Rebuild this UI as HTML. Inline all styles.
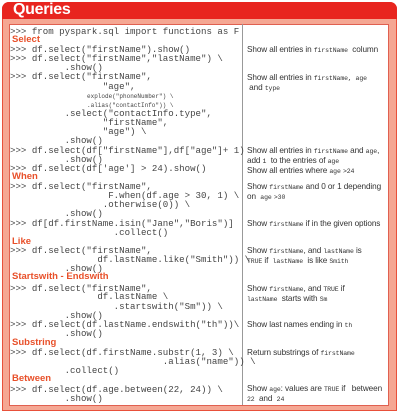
<!DOCTYPE html>
<html><head><meta charset="utf-8"><style>
*{margin:0;padding:0}
body{width:400px;height:413px;background:#fff;position:relative;overflow:hidden;font-family:"Liberation Sans",sans-serif}
#outer{position:absolute;left:2px;top:2px;width:393px;height:407px;background:#f5a793;border:1px solid #e8503a;border-radius:7px 7px 0 0}
#bar{position:absolute;left:2px;top:2px;width:395px;height:17px;background:#e8251f;border-radius:7px 7px 0 0}
#title{position:absolute;left:13px;top:1px;color:#fff;font-weight:bold;font-size:16px;letter-spacing:-.3px}
#box{position:absolute;left:9px;top:24px;width:378px;height:380px;background:#fff;border:1px solid #e06050}
#div{position:absolute;left:242px;top:24px;width:1px;height:381px;background:#999}
.c{position:absolute;font-family:"Liberation Mono",monospace;font-size:9.1px;color:#444;white-space:pre;line-height:10px}
.s{font-size:6px}
.h{position:absolute;left:12px;color:#e8502a;font-weight:bold;font-size:9.5px;line-height:10px}
.d{position:absolute;left:247px;font-size:8.2px;color:#333;white-space:pre;line-height:9px;letter-spacing:-.1px}
.d m{font-family:"Liberation Mono",monospace;font-size:6.5px}
</style></head><body>
<div id="outer"></div><div id="bar"></div><div id="title">Queries</div>
<div id="box"></div><div id="div"></div>
<div class="c" style="left:10px;top:27px">&gt;&gt;&gt; from pyspark.sql import functions as F</div>
<div class="h" style="top:35px">Select</div>
<div class="c" style="left:10px;top:45px">&gt;&gt;&gt; df.select("firstName").show()</div>
<div class="c" style="left:10px;top:54px">&gt;&gt;&gt; df.select("firstName","lastName") \</div>
<div class="c" style="left:10px;top:63px">          .show()</div>
<div class="c" style="left:10px;top:72px">&gt;&gt;&gt; df.select("firstName",</div>
<div class="c" style="left:10px;top:82px">                 "age",</div>
<div class="c s" style="left:87px;top:92px">explode("phoneNumber") \</div>
<div class="c s" style="left:87px;top:101px">.alias("contactInfo")) \</div>
<div class="c" style="left:10px;top:109px">          .select("contactInfo.type",</div>
<div class="c" style="left:10px;top:118px">                 "firstName",</div>
<div class="c" style="left:10px;top:127px">                 "age") \</div>
<div class="c" style="left:10px;top:136px">          .show()</div>
<div class="c" style="left:10px;top:146px">&gt;&gt;&gt; df.select(df["firstName"],df["age"]+ 1)</div>
<div class="c" style="left:10px;top:155px">          .show()</div>
<div class="c" style="left:10px;top:164px">&gt;&gt;&gt; df.select(df['age'] &gt; 24).show()</div>
<div class="h" style="top:172px">When</div>
<div class="c" style="left:10px;top:182px">&gt;&gt;&gt; df.select("firstName",</div>
<div class="c" style="left:10px;top:191px">                  F.when(df.age &gt; 30, 1) \</div>
<div class="c" style="left:10px;top:200px">                 .otherwise(0)) \</div>
<div class="c" style="left:10px;top:209px">          .show()</div>
<div class="c" style="left:10px;top:219px">&gt;&gt;&gt; df[df.firstName.isin("Jane","Boris")]</div>
<div class="c" style="left:10px;top:228px">                   .collect()</div>
<div class="h" style="top:237px">Like</div>
<div class="c" style="left:10px;top:246px">&gt;&gt;&gt; df.select("firstName",</div>
<div class="c" style="left:10px;top:255px">                df.lastName.like("Smith")) \</div>
<div class="c" style="left:10px;top:264px">          .show()</div>
<div class="h" style="top:272px">Startswith - Endswith</div>
<div class="c" style="left:10px;top:284px">&gt;&gt;&gt; df.select("firstName",</div>
<div class="c" style="left:10px;top:292px">                df.lastName \</div>
<div class="c" style="left:10px;top:302px">                   .startswith("Sm")) \</div>
<div class="c" style="left:10px;top:311px">          .show()</div>
<div class="c" style="left:10px;top:320px">&gt;&gt;&gt; df.select(df.lastName.endswith("th"))\</div>
<div class="c" style="left:10px;top:329px">          .show()</div>
<div class="h" style="top:338px">Substring</div>
<div class="c" style="left:10px;top:348px">&gt;&gt;&gt; df.select(df.firstName.substr(1, 3) \</div>
<div class="c" style="left:10px;top:357px">                            .alias("name")) \</div>
<div class="c" style="left:10px;top:366px">          .collect()</div>
<div class="h" style="top:374px">Between</div>
<div class="c" style="left:10px;top:385px">&gt;&gt;&gt; df.select(df.age.between(22, 24)) \</div>
<div class="c" style="left:10px;top:394px">          .show()</div>

<div class="d" style="top:45px">Show all entries in <m>firstName</m>  column</div>
<div class="d" style="top:73px">Show all entries in <m>firstName, age</m>
 and <m>type</m></div>
<div class="d" style="top:146px">Show all entries in <m>firstName</m> and <m>age</m>,
add <m>1</m>  to the entries of <m>age</m>
Show all entries where <m>age</m> <m>&gt;24</m></div>
<div class="d" style="top:182px">Show <m>firstName</m> and 0 or 1 depending
on  <m>age</m> <m>&gt;30</m></div>
<div class="d" style="top:219px">Show <m>firstName</m> if in the given options</div>
<div class="d" style="top:246px">Show <m>firstName</m>, and <m>lastName</m> is
<m>TRUE</m> if  <m>lastName</m>  is like <m>Smith</m></div>
<div class="d" style="top:284px">Show <m>firstName</m>, and <m>TRUE</m> if
<m>lastName</m>  starts with <m>Sm</m></div>
<div class="d" style="top:320px">Show last names ending in <m>th</m></div>
<div class="d" style="top:348px">Return substrings of <m>firstName</m></div>
<div class="d" style="top:384px">Show <m>age</m>: values are <m>TRUE</m> if   between
<m>22</m>  and  <m>24</m></div>
</body></html>
